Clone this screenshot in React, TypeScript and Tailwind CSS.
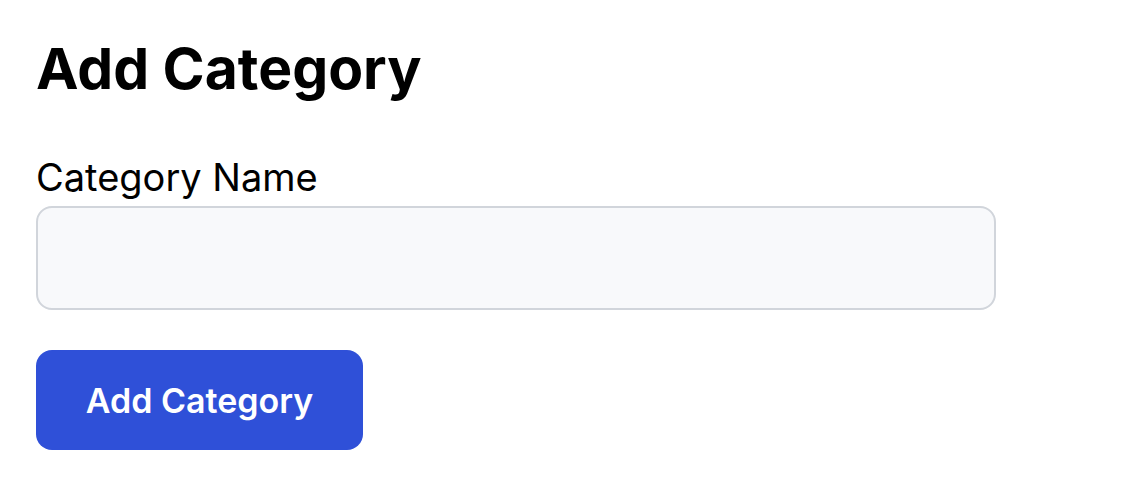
export default function App() {
  return (
    <div className="bg-white w-[1134px] h-[496px] px-[36px] pt-[29px]" style={{ fontFamily: 'Inter, "Noto Sans", sans-serif' }}>
      <h1 className="text-[57px] font-bold leading-[80px] text-black">Add Category</h1>
      <div className="mt-[46px]">
        <label className="block text-[38px] leading-[44px] text-black">Category Name</label>
        <input className="block mt-[7px] w-[960px] h-[104px] rounded-[16px] border-2 border-[#d1d5db] bg-[#f8f9fb] outline-none" />
      </div>
      <button className="mt-[40px] w-[327px] h-[100px] rounded-[16px] bg-[#2f50d8] text-white text-[34px] font-semibold">Add Category</button>
    </div>
  );
}
